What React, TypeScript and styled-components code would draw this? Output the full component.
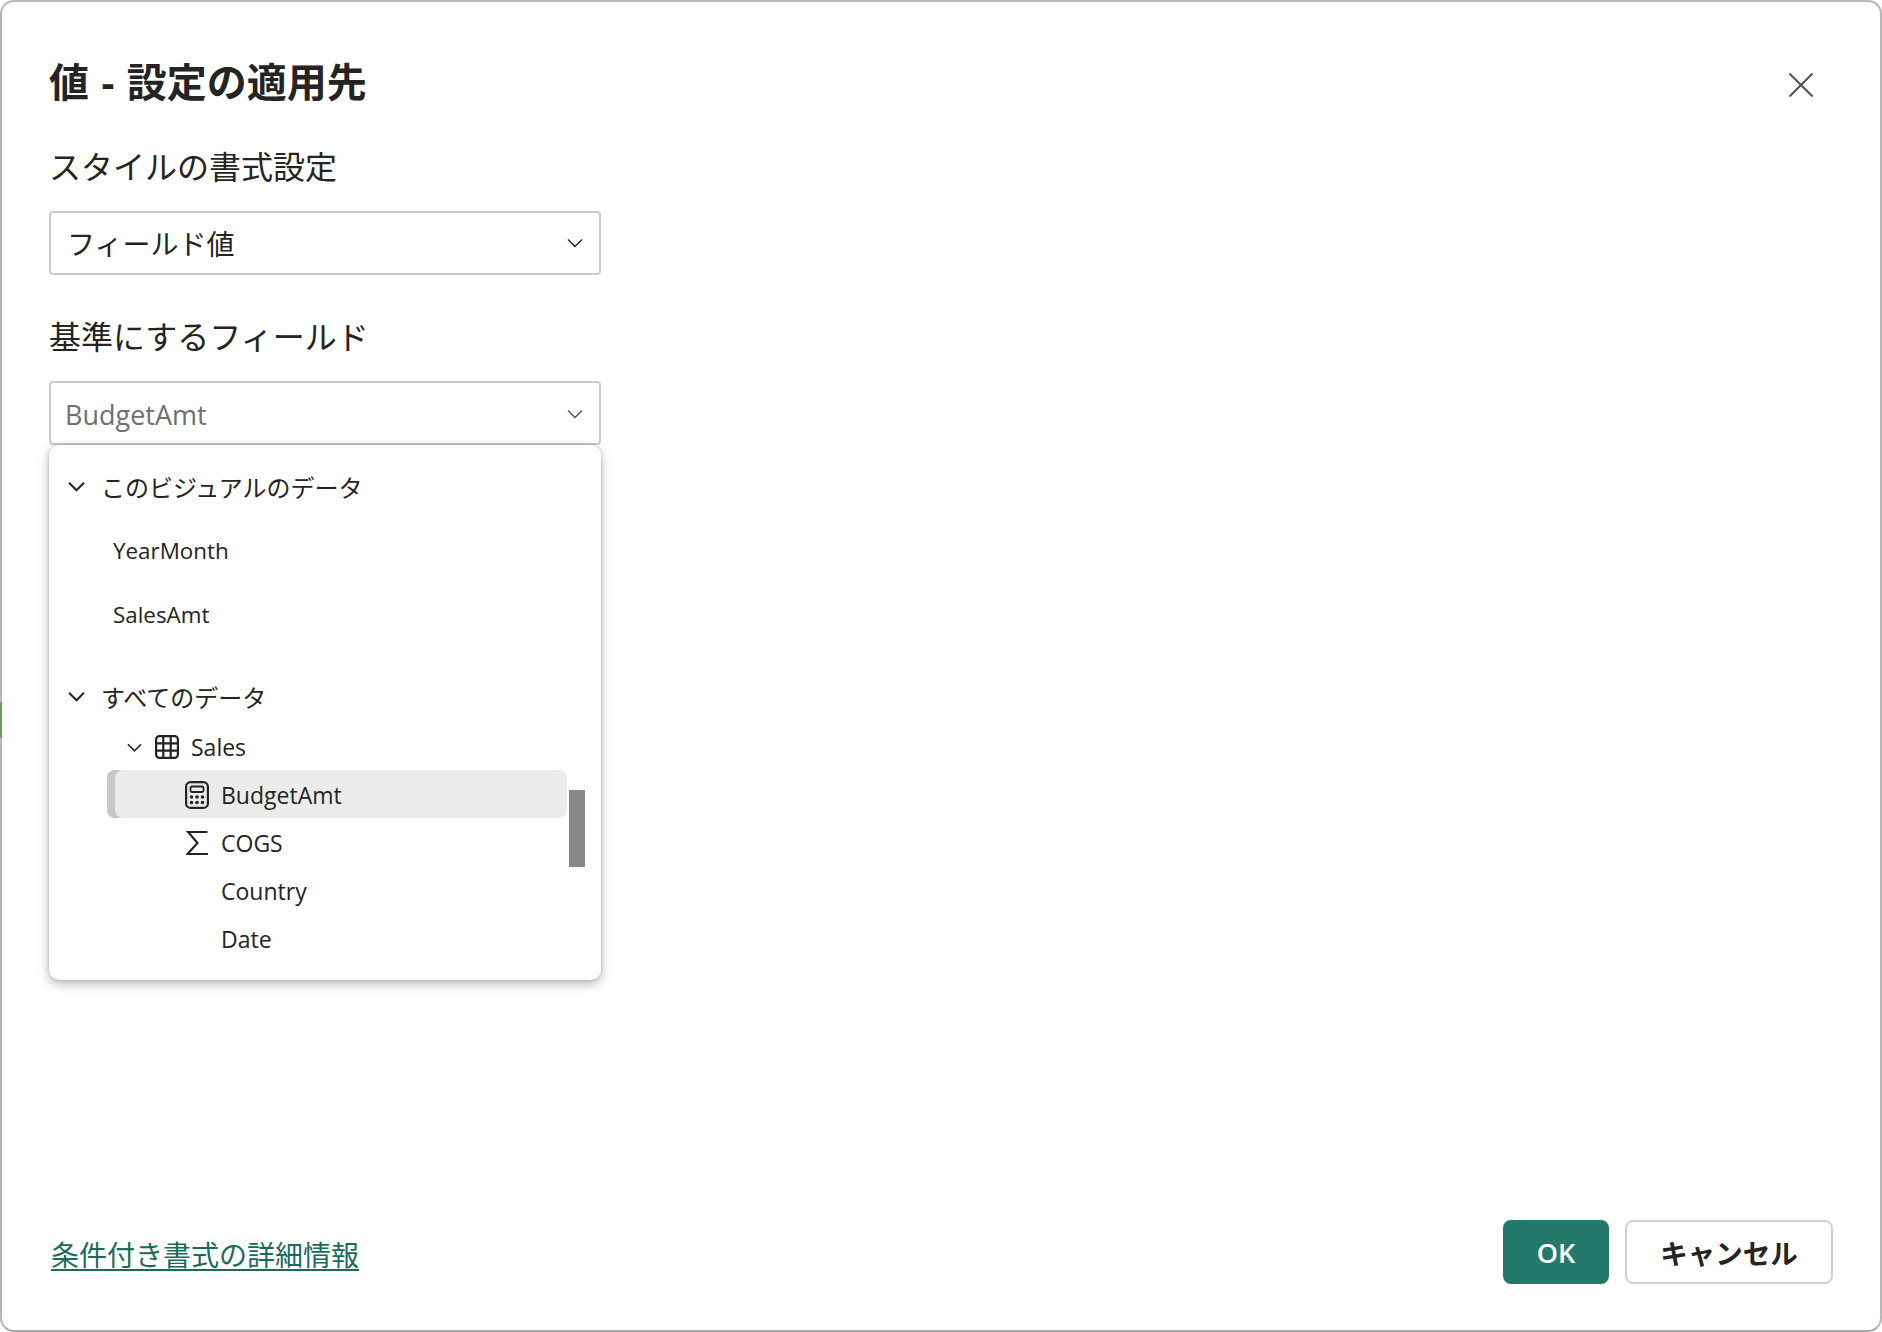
import React from "react";
import styled, { createGlobalStyle } from "styled-components";

const Global = createGlobalStyle`
  html, body { margin: 0; padding: 0; background: #fff; }
  body { font-family: "Open Sans", "Noto Sans CJK JP", sans-serif; color: #252423; }
  * { box-sizing: border-box; }
`;

const Dialog = styled.div`
  position: relative;
  width: 1882px; height: 1332px;
  border: 2px solid #b7b7b7; border-bottom-color: #a8a8a8; border-radius: 14px;
  background: #fff;
  padding: 54px 47px 0;
  display: flex; flex-direction: column;
`;
const BackdropPeek = styled.div`
  position: absolute; left: -2px; top: 700px; width: 2px; height: 36px; background: #6f9a66;
`;
const Header = styled.header`
  display: flex; justify-content: space-between; align-items: center;
  padding-right: 20px;
`;
const Title = styled.h1`
  margin: 0; font-size: 40px; line-height: 52px; font-weight: 700; color: #252423;
  word-spacing: 2px;
`;
const CloseButton = styled.button`
  width: 24px; height: 24px; padding: 0; margin-top: 6px;
  border: 0; background: none; display: flex; color: #505050;
`;
const Label = styled.div<{ $top: number }>`
  font-size: 32px; line-height: 44px; margin-top: ${(p) => p.$top}px; margin-bottom: 22px;
`;
const Select = styled.div<{ $muted?: boolean }>`
  width: 552px; height: 64px; flex: none;
  border: 2px solid #cbcbcb; border-radius: 4px;
  display: flex; align-items: center; justify-content: space-between;
  padding: ${(p) => (p.$muted ? "2px 16px 0 14px" : "0 16px 0 16px")};
  font-size: ${(p) => (p.$muted ? 27 : 28)}px;
  color: ${(p) => (p.$muted ? "#707070" : "#252423")};
`;
const Dropdown = styled.div`
  position: relative;
  width: 552px; height: 535px; flex: none;
  border-radius: 10px; background: #fff;
  box-shadow: 0 4px 12px rgba(0,0,0,.28), 0 0 3px rgba(0,0,0,.2);
  padding-top: 21px;
  font-size: 24px;
`;
const GroupHead = styled.div<{ $top?: number }>`
  height: 40px; display: flex; align-items: center; gap: 16px;
  padding-left: 19px; margin-top: ${(p) => p.$top ?? 0}px;
`;
const VisualRow = styled.div`
  height: 63.5px; display: flex; align-items: center; padding-left: 64px;
  font-size: 22.4px;
`;
const VisualList = styled.div`
  margin-top: 13px;
`;
const TreeList = styled.div`
  margin-top: 6px; margin-left: 58px; margin-right: 34px;
  font-size: 23px;
`;
const TreeRow = styled.div<{ $selected?: boolean; $child?: boolean }>`
  height: 48px; display: flex; align-items: center; gap: ${(p) => (p.$child ? 12 : 12.5)}px;
  padding: 2px 0 0 ${(p) => (p.$child ? 78 : 20)}px;
  border-radius: 8px;
  background: ${(p) => (p.$selected ? "#ebebeb" : "transparent")};
  box-shadow: ${(p) => (p.$selected ? "inset 8px 0 0 #c8c8c8" : "none")};
`;
const IconSlot = styled.span`
  width: 24px; height: 28px; flex: none; display: flex; align-items: center; justify-content: center;
`;
const ScrollThumb = styled.div`
  position: absolute; left: 520px; top: 345px; width: 16px; height: 77px; background: #8a8886;
`;
const Footer = styled.footer`
  margin-top: auto; margin-bottom: 46px;
  display: flex; align-items: center; justify-content: space-between;
  padding-left: 2px;
`;
const HelpLink = styled.a`
  font-size: 28px; line-height: 38px; color: #1a6b5c; text-decoration: underline;
  text-decoration-thickness: 2px; text-underline-offset: 3px;
  position: relative; top: 3px;
`;
const Actions = styled.div`
  display: flex; gap: 16px;
`;
const PrimaryButton = styled.button`
  width: 106px; height: 64px; border: 0; border-radius: 8px;
  background: #25796a; color: #fff;
  font: 600 27px "Open Sans", sans-serif;
`;
const SecondaryButton = styled.button`
  width: 208px; height: 64px; border: 2px solid #d1d1d1; border-radius: 8px;
  background: #fff; color: #252423;
  font: 700 27.5px "Noto Sans CJK JP", sans-serif;
`;

const Chevron = ({ size = 16, weight = 2, color = "#252423" }: { size?: number; weight?: number; color?: string }) => (
  <svg width={size} height={size} viewBox="0 0 16 16" fill="none" style={{ flex: "none" }}>
    <path d="M1 4.5 8 11.5 15 4.5" stroke={color} strokeWidth={weight} vectorEffect="non-scaling-stroke" />
  </svg>
);
const CloseIcon = () => (
  <svg width="24" height="24" viewBox="0 0 24 24" fill="none">
    <path d="M.5.5 23.5 23.5M23.5.5.5 23.5" stroke="currentColor" strokeWidth="2" />
  </svg>
);
const TableIcon = () => (
  <svg width="24" height="24" viewBox="0 0 24 24" fill="none" stroke="#252423" strokeWidth="2.2">
    <rect x="1.1" y="1.1" width="21.8" height="21.8" rx="3.5" />
    <path d="M8.3 1v22M15.7 1v22M1 8.3h22M1 15.7h22" />
  </svg>
);
const CalculatorIcon = () => (
  <svg width="24" height="28" viewBox="0 0 24 28" fill="none">
    <rect x="1.1" y="1.1" width="21.8" height="25.8" rx="4.5" stroke="#252423" strokeWidth="2.2" />
    <rect x="5.5" y="5.5" width="13" height="5.5" rx="1.5" stroke="#252423" strokeWidth="1.8" />
    {[6.5, 12, 17.5].flatMap((x) =>
      [16, 21.5].map((y) => <circle key={`${x}-${y}`} cx={x} cy={y} r="1.8" fill="#252423" />)
    )}
  </svg>
);
const SigmaIcon = () => (
  <svg width="22" height="24" viewBox="0 0 22 24" fill="none">
    <path d="M21.5 1H2L11.5 12 1.5 23H22" stroke="#252423" strokeWidth="2.2" />
  </svg>
);

export default function App() {
  return (
    <>
      <Global />
      <Dialog>
        <BackdropPeek />
        <Header>
          <Title>値 - 設定の適用先</Title>
          <CloseButton aria-label="閉じる"><CloseIcon /></CloseButton>
        </Header>
        <Label $top={37}>スタイルの書式設定</Label>
        <Select>
          フィールド値
          <Chevron size={16} weight={1.4} />
        </Select>
        <Label $top={40}>基準にするフィールド</Label>
        <Select $muted>
          BudgetAmt
          <Chevron size={16} weight={1.4} color="#505050" />
        </Select>
        <Dropdown>
          <GroupHead>
            <Chevron size={17} />
            このビジュアルのデータ
          </GroupHead>
          <VisualList>
            <VisualRow>YearMonth</VisualRow>
            <VisualRow>SalesAmt</VisualRow>
          </VisualList>
          <GroupHead $top={30}>
            <Chevron size={17} />
            すべてのデータ
          </GroupHead>
          <TreeList>
            <TreeRow>
              <Chevron size={15} weight={1.6} />
              <IconSlot><TableIcon /></IconSlot>
              Sales
            </TreeRow>
            <TreeRow $selected $child>
              <IconSlot><CalculatorIcon /></IconSlot>
              BudgetAmt
            </TreeRow>
            <TreeRow $child>
              <IconSlot><SigmaIcon /></IconSlot>
              COGS
            </TreeRow>
            <TreeRow $child>
              <IconSlot />
              Country
            </TreeRow>
            <TreeRow $child>
              <IconSlot />
              Date
            </TreeRow>
          </TreeList>
          <ScrollThumb />
        </Dropdown>
        <Footer>
          <HelpLink href="#">条件付き書式の詳細情報</HelpLink>
          <Actions>
            <PrimaryButton>OK</PrimaryButton>
            <SecondaryButton>キャンセル</SecondaryButton>
          </Actions>
        </Footer>
      </Dialog>
    </>
  );
}
